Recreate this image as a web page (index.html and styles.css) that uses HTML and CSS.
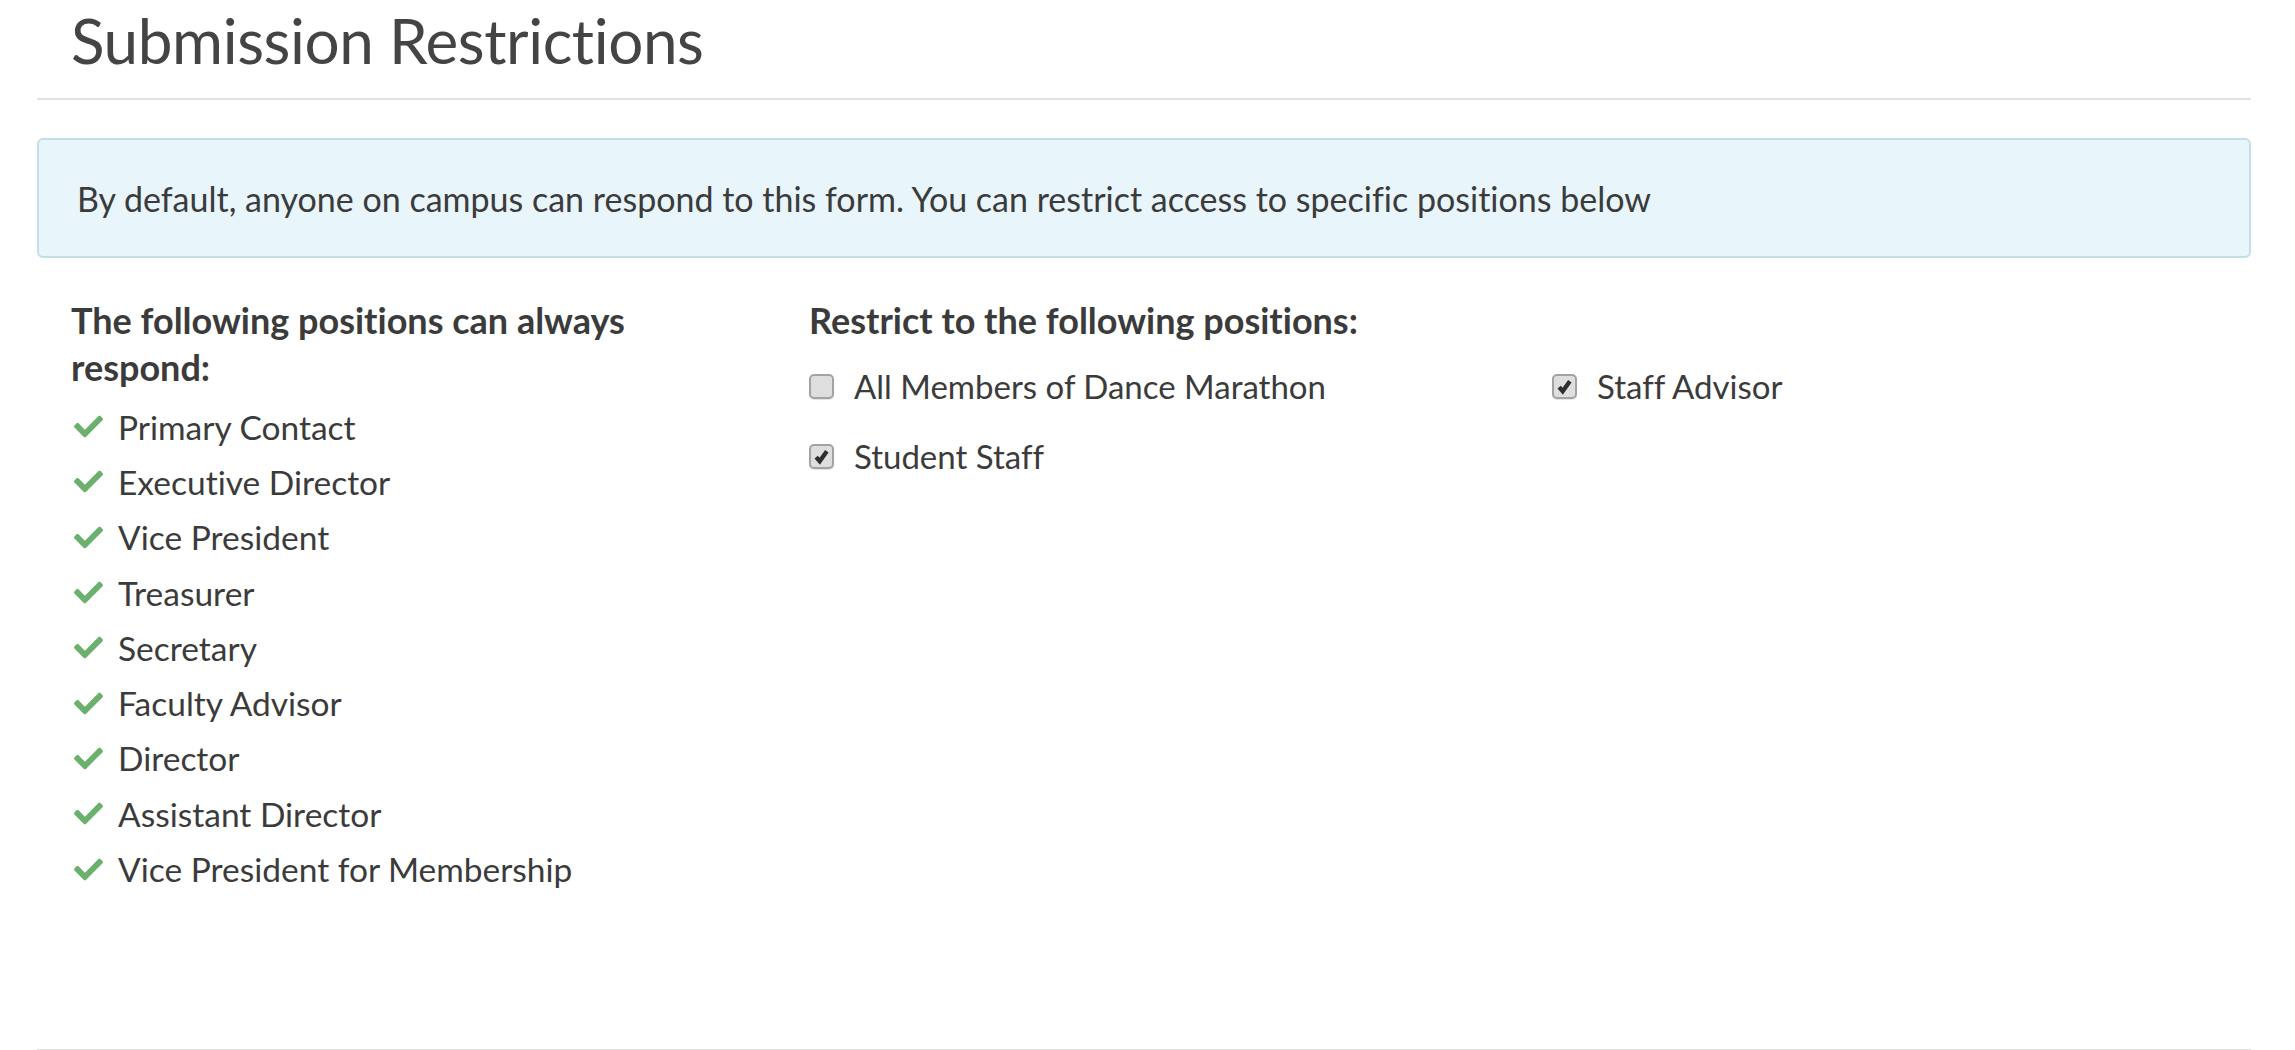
FILE: index.html
```html
<!DOCTYPE html>
<html lang="en">
<head>
    <meta charset="UTF-8">
    <meta name="viewport" content="width=device-width, initial-scale=1.0">
    <title>Submission Restrictions</title>
    <link rel="stylesheet" href="styles.css">
</head>
<body>
    <div class="page">
        <div class="header">
            <h1 class="title">Submission Restrictions</h1>
        </div>
        <div class="alert">
            By default, anyone on campus can respond to this form. You can restrict access to specific positions below
        </div>
        <div class="content">
            <div class="always">
                <h4 class="heading">The following positions can always respond:</h4>
                <ul class="list">
                    <li><svg class="tick" viewBox="0 0 512 400"><path d="M173.9 383.4l-166.4-166.4c-10-10-10-26.2 0-36.2l36.2-36.2c10-10 26.2-10 36.2 0L192 256.7 432.1 16.6c10-10 26.2-10 36.2 0l36.2 36.2c10 10 10 26.2 0 36.2l-294.4 294.4c-10 10-26.2 10-36.2 0z"/></svg>Primary Contact</li>
                    <li><svg class="tick" viewBox="0 0 512 400"><path d="M173.9 383.4l-166.4-166.4c-10-10-10-26.2 0-36.2l36.2-36.2c10-10 26.2-10 36.2 0L192 256.7 432.1 16.6c10-10 26.2-10 36.2 0l36.2 36.2c10 10 10 26.2 0 36.2l-294.4 294.4c-10 10-26.2 10-36.2 0z"/></svg>Executive Director</li>
                    <li><svg class="tick" viewBox="0 0 512 400"><path d="M173.9 383.4l-166.4-166.4c-10-10-10-26.2 0-36.2l36.2-36.2c10-10 26.2-10 36.2 0L192 256.7 432.1 16.6c10-10 26.2-10 36.2 0l36.2 36.2c10 10 10 26.2 0 36.2l-294.4 294.4c-10 10-26.2 10-36.2 0z"/></svg>Vice President</li>
                    <li><svg class="tick" viewBox="0 0 512 400"><path d="M173.9 383.4l-166.4-166.4c-10-10-10-26.2 0-36.2l36.2-36.2c10-10 26.2-10 36.2 0L192 256.7 432.1 16.6c10-10 26.2-10 36.2 0l36.2 36.2c10 10 10 26.2 0 36.2l-294.4 294.4c-10 10-26.2 10-36.2 0z"/></svg>Treasurer</li>
                    <li><svg class="tick" viewBox="0 0 512 400"><path d="M173.9 383.4l-166.4-166.4c-10-10-10-26.2 0-36.2l36.2-36.2c10-10 26.2-10 36.2 0L192 256.7 432.1 16.6c10-10 26.2-10 36.2 0l36.2 36.2c10 10 10 26.2 0 36.2l-294.4 294.4c-10 10-26.2 10-36.2 0z"/></svg>Secretary</li>
                    <li><svg class="tick" viewBox="0 0 512 400"><path d="M173.9 383.4l-166.4-166.4c-10-10-10-26.2 0-36.2l36.2-36.2c10-10 26.2-10 36.2 0L192 256.7 432.1 16.6c10-10 26.2-10 36.2 0l36.2 36.2c10 10 10 26.2 0 36.2l-294.4 294.4c-10 10-26.2 10-36.2 0z"/></svg>Faculty Advisor</li>
                    <li><svg class="tick" viewBox="0 0 512 400"><path d="M173.9 383.4l-166.4-166.4c-10-10-10-26.2 0-36.2l36.2-36.2c10-10 26.2-10 36.2 0L192 256.7 432.1 16.6c10-10 26.2-10 36.2 0l36.2 36.2c10 10 10 26.2 0 36.2l-294.4 294.4c-10 10-26.2 10-36.2 0z"/></svg>Director</li>
                    <li><svg class="tick" viewBox="0 0 512 400"><path d="M173.9 383.4l-166.4-166.4c-10-10-10-26.2 0-36.2l36.2-36.2c10-10 26.2-10 36.2 0L192 256.7 432.1 16.6c10-10 26.2-10 36.2 0l36.2 36.2c10 10 10 26.2 0 36.2l-294.4 294.4c-10 10-26.2 10-36.2 0z"/></svg>Assistant Director</li>
                    <li><svg class="tick" viewBox="0 0 512 400"><path d="M173.9 383.4l-166.4-166.4c-10-10-10-26.2 0-36.2l36.2-36.2c10-10 26.2-10 36.2 0L192 256.7 432.1 16.6c10-10 26.2-10 36.2 0l36.2 36.2c10 10 10 26.2 0 36.2l-294.4 294.4c-10 10-26.2 10-36.2 0z"/></svg>Vice President for Membership</li>
                </ul>
            </div>
            <div class="restrict">
                <h4 class="heading">Restrict to the following positions:</h4>
                <div class="options">
                    <label class="option"><span class="box"></span>All Members of Dance Marathon</label>
                    <label class="option"><span class="box checked"><svg viewBox="0 0 16 16"><path d="M3.5 8.5l3 3.5 6-8.5"/></svg></span>Staff Advisor</label>
                    <label class="option"><span class="box checked"><svg viewBox="0 0 16 16"><path d="M3.5 8.5l3 3.5 6-8.5"/></svg></span>Student Staff</label>
                </div>
            </div>
        </div>
        <div class="footer-line"></div>
    </div>
</body>
</html>
```

FILE: styles.css
```css
body {
    margin: 0;
    background: #fff;
    color: #3b3b3b;
    font-family: Lato, "Noto Sans", sans-serif;
    font-variant-ligatures: none;
}
.page {
    padding: 0 44px 0 37px;
}
.header {
    height: 100px;
    border-bottom: 2px solid #e2e2e2;
    padding-left: 34px;
    box-sizing: border-box;
}
.title {
    margin: 0;
    padding-top: 7px;
    font-size: 62px;
    font-weight: 400;
    line-height: 66px;
    color: #444;
    letter-spacing: -0.4px;
}
.alert {
    margin-top: 38px;
    height: 120px;
    box-sizing: border-box;
    display: flex;
    align-items: center;
    padding: 0 38px;
    background: #e8f5fb;
    border: 2px solid #c4dee8;
    border-radius: 6px;
    font-size: 34px;
}
.content {
    display: grid;
    grid-template-columns: 738px 1fr;
    padding: 0 34px;
    margin-top: 39px;
}
.always {
    padding-right: 56px;
}
.heading {
    margin: 0;
    font-size: 36px;
    font-weight: 700;
    line-height: 47px;
}
.list {
    list-style: none;
    margin: 8px 0 0;
    padding: 0;
}
.list li {
    display: flex;
    align-items: center;
    height: 55.3px;
    font-size: 33.5px;
}
.tick {
    width: 29px;
    height: 23px;
    margin: 0 15px 0 3px;
    fill: #6bb06d;
}
.options {
    display: grid;
    grid-template-columns: 743px 1fr;
    row-gap: 24px;
    margin-top: 19px;
}
.option {
    display: flex;
    align-items: center;
    height: 46px;
    font-size: 33px;
}
.box {
    width: 21px;
    height: 21px;
    margin-right: 20px;
    border: 2px solid #a3a3a3;
    border-radius: 5px;
    background: #dedede;
    box-shadow: 0 1px 1px rgba(0, 0, 0, 0.12);
    display: flex;
    align-items: center;
    justify-content: center;
}
.box svg {
    width: 19px;
    height: 19px;
    fill: none;
    stroke: #2e2e2e;
    stroke-width: 3.6;
}
.footer-line {
    margin-top: 152px;
    border-top: 2px solid #e2e2e2;
}
```
